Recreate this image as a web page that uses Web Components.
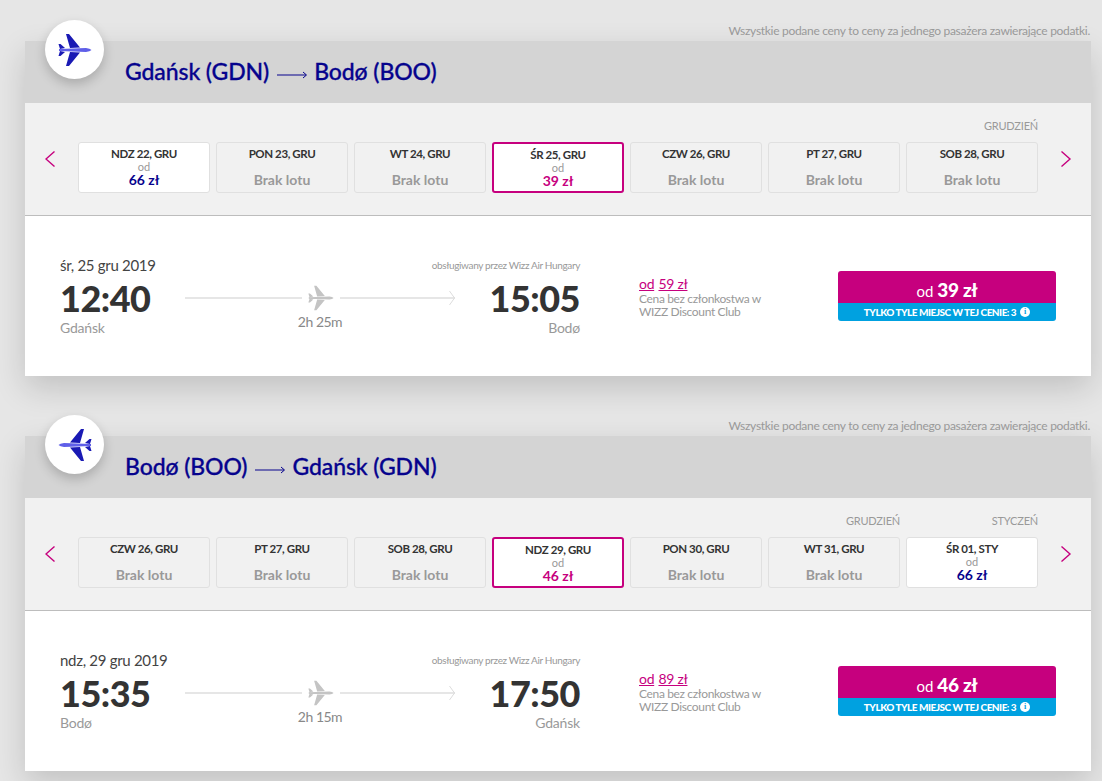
<!DOCTYPE html>
<html lang="pl">
<head>
<meta charset="utf-8">
<title>Wizz Air</title>
<style>
  html, body { margin: 0; padding: 0; }
  body {
    background: #e6e6e6;
    font-family: Lato, "Liberation Sans", sans-serif;
    color: #333;
    height: 781px;
    overflow: hidden;
  }
  main {
    display: flex;
    flex-direction: column;
    gap: 19px;
    padding: 0 11px 0 25px;
  }
</style>
</head>
<body>
<main>
  <flight-section from="Gdańsk (GDN)" to="Bodø (BOO)">
    <date-strip selected="3" dates='[
      {"label":"NDZ 22, GRU","price":"66 zł"},
      {"label":"PON 23, GRU"},
      {"label":"WT 24, GRU"},
      {"label":"ŚR 25, GRU","price":"39 zł"},
      {"label":"CZW 26, GRU"},
      {"label":"PT 27, GRU"},
      {"label":"SOB 28, GRU"}
    ]' months='{"6":"GRUDZIEŃ"}'></date-strip>
    <flight-row date="śr, 25 gru 2019" dep="12:40" arr="15:05" origin="Gdańsk" dest="Bodø" duration="2h 25m" club="59 zł" price="39 zł"></flight-row>
  </flight-section>

  <flight-section from="Bodø (BOO)" to="Gdańsk (GDN)" return>
    <date-strip selected="3" dates='[
      {"label":"CZW 26, GRU"},
      {"label":"PT 27, GRU"},
      {"label":"SOB 28, GRU"},
      {"label":"NDZ 29, GRU","price":"46 zł"},
      {"label":"PON 30, GRU"},
      {"label":"WT 31, GRU"},
      {"label":"ŚR 01, STY","price":"66 zł"}
    ]' months='{"5":"GRUDZIEŃ","6":"STYCZEŃ"}'></date-strip>
    <flight-row date="ndz, 29 gru 2019" dep="15:35" arr="17:50" origin="Bodø" dest="Gdańsk" duration="2h 15m" club="89 zł" price="46 zł"></flight-row>
  </flight-section>
</main>

<script>
const PLANE_WINGS = 'M8 1 L11 1 L22 14.5 L12 15 Z M8 33 L11 33 L22 19.5 L12 19 Z M0.5 11 L2.5 11 L7 15 L2 16 Z M0.5 23 L2.5 23 L7 19 L2 18 Z'
const PLANE_BODY = 'M1 16 L28 15 Q32 15.6 33.5 17 Q32 18.4 28 19 L1 18 Z'

class FlightSection extends HTMLElement {
  connectedCallback() {
    const from = this.getAttribute('from')
    const to = this.getAttribute('to')
    const flip = this.hasAttribute('return') ? 'scaleX(-1)' : 'none'
    this.attachShadow({ mode: 'open' }).innerHTML = `
      <style>
        :host { display: block; position: relative; }
        .note {
          height: 41px;
          box-sizing: border-box;
          padding: 22px 1px 0 0;
          font-size: 12px;
          letter-spacing: -.3px;
          line-height: 18px;
          color: #999;
          text-align: right;
          white-space: nowrap;
        }
        .card { box-shadow: 0 12px 30px rgba(0, 0, 0, .16); background: #f1f1f1; }
        header {
          height: 62px;
          box-sizing: border-box;
          padding: 15px 0 0 100px;
          display: flex;
          align-items: flex-start;
          background: #d4d4d4;
          color: #06038d;
          font-size: 23px;
          font-weight: 500;
          letter-spacing: -.1px;
          -webkit-text-stroke: .3px #06038d;
          line-height: 30px;
          white-space: nowrap;
        }
        header svg { margin: 4px 7px 0 8px; }
        .badge {
          position: absolute;
          left: 20px;
          top: 20px;
          width: 59px;
          height: 59px;
          border-radius: 50%;
          background: #fff;
          box-shadow: 0 5px 12px rgba(0, 0, 0, .2);
          display: flex;
          align-items: center;
          justify-content: center;
        }
        .badge svg { transform: ${flip}; }
      </style>
      <div class="note">Wszystkie podane ceny to ceny za jednego pasażera zawierające podatki.</div>
      <div class="badge">
        <svg width="34" height="34" viewBox="0 0 34 34">
          <path fill="#1a1ab4" d="${PLANE_WINGS}"/>
          <path fill="#5f5fe8" d="${PLANE_BODY}"/>
        </svg>
      </div>
      <div class="card">
        <header>
          <span>${from}</span>
          <svg width="30" height="24" viewBox="0 0 30 24" fill="none" stroke="#06038d" stroke-width="1">
            <path d="M0 15 H29 M26 12 L29.5 15 L26 18"/>
          </svg>
          <span>${to}</span>
        </header>
        <slot></slot>
      </div>
    `
  }
}

class DateStrip extends HTMLElement {
  connectedCallback() {
    const dates = JSON.parse(this.getAttribute('dates') || '[]')
    const months = JSON.parse(this.getAttribute('months') || '{}')
    const selected = Number(this.getAttribute('selected'))
    const monthCells = dates.map((d, i) => `<span>${months[i] || ''}</span>`).join('')
    const tiles = dates.map((d, i) => `
      <date-tile label="${d.label}" ${d.price ? `price="${d.price}"` : ''} ${i === selected ? 'selected' : ''}></date-tile>
    `).join('')
    this.attachShadow({ mode: 'open' }).innerHTML = `
      <style>
        :host {
          display: flex;
          background: #f1f1f1;
          border-bottom: 1px solid #bdbdbd;
          padding: 15px 0 22px;
        }
        .nav { width: 53px; flex: none; display: flex; align-items: flex-start; justify-content: center; }
        .nav svg { margin-top: 33px; }
        .prev { padding-right: 2px; box-sizing: border-box; }
        .next { padding-left: 4px; box-sizing: border-box; }
        .days { flex: 1; }
        .months, .tiles { display: grid; grid-template-columns: repeat(7, 132px); gap: 6px; }
        .months {
          height: 16px;
          margin-bottom: 8px;
          font-size: 11px;
          letter-spacing: -.2px;
          line-height: 16px;
          color: #999;
          text-align: right;
        }
      </style>
      <div class="nav prev">
        <svg width="11" height="16" viewBox="0 0 11 16" fill="none" stroke="#c6007e" stroke-width="1.4"><path d="M9.5 .5 L1 8 L9.5 15.5"/></svg>
      </div>
      <div class="days">
        <div class="months">${monthCells}</div>
        <div class="tiles">${tiles}</div>
      </div>
      <div class="nav next">
        <svg width="11" height="16" viewBox="0 0 11 16" fill="none" stroke="#c6007e" stroke-width="1.4"><path d="M.5 .5 L9 8 L.5 15.5"/></svg>
      </div>
    `
  }
}

class DateTile extends HTMLElement {
  connectedCallback() {
    const label = this.getAttribute('label')
    const price = this.getAttribute('price')
    const body = price
      ? `<div class="od">od</div><div class="price">${price}</div>`
      : `<div class="none">Brak lotu</div>`
    this.attachShadow({ mode: 'open' }).innerHTML = `
      <style>
        :host {
          display: block;
          height: 51px;
          box-sizing: border-box;
          border: 1px solid #e0e0e0;
          border-radius: 3px;
          text-align: center;
          padding-top: 3px;
          white-space: nowrap;
        }
        :host([price]) { background: #fff; }
        :host([selected]) { border: 2px solid #c6007e; }
        .label { font-size: 11.5px; letter-spacing: -.4px; line-height: 16px; font-weight: 700; color: #333; }
        .od { font-size: 11px; line-height: 10px; color: #999; }
        .price { font-size: 14px; line-height: 14px; font-weight: 700; color: #06038d; margin-top: 1px; }
        :host([selected]) .price { color: #c6007e; }
        .none { font-size: 14px; line-height: 18px; font-weight: 700; color: #999; margin-top: 9px; }
      </style>
      <div class="label">${label}</div>
      ${body}
    `
  }
}

class FlightRow extends HTMLElement {
  connectedCallback() {
    const a = (name) => this.getAttribute(name)
    this.attachShadow({ mode: 'open' }).innerHTML = `
      <style>
        :host {
          display: grid;
          grid-template-columns: 520px 59px 199px 218px;
          height: 160px;
          box-sizing: border-box;
          padding: 40px 35px 0;
          background: #fff;
        }
        .times { grid-column: 1; }
        .top { display: flex; justify-content: space-between; align-items: center; height: 18px; }
        .date { font-size: 15px; letter-spacing: -.3px; line-height: 18px; color: #444; }
        .operator { font-size: 10px; letter-spacing: -.35px; color: #999; }
        .main { display: flex; align-items: center; height: 44px; margin-top: 2px; }
        .time { font-size: 36px; letter-spacing: -.5px; line-height: 44px; font-weight: 900; color: #333; width: 100px; }
        .time.end { text-align: right; width: 95px; }
        .route { flex: 1; position: relative; height: 44px; display: flex; align-items: center; padding-left: 25px; }
        .line { height: 2px; background: #e6e6e6; flex: none; }
        .route svg { flex: none; }
        .duration {
          position: absolute;
          left: 110px;
          top: 37px;
          width: 100px;
          text-align: center;
          font-size: 14px;
          letter-spacing: -.5px;
          line-height: 18px;
          color: #888;
        }
        .cities { display: flex; justify-content: space-between; font-size: 14px; letter-spacing: -.2px; line-height: 18px; color: #999; margin-top: -1px; }
        .club { grid-column: 3; padding-top: 19px; }
        .club a { display: block; font-size: 14px; letter-spacing: -.3px; line-height: 17px; color: #c6007e; text-decoration: none; }
        .club a span { text-decoration: underline; margin-right: 1px; }
        .club p { margin: 0; font-size: 12px; letter-spacing: -.35px; line-height: 13px; color: #999; }
      </style>
      <div class="times">
        <div class="top"><span class="date">${a('date')}</span><span class="operator">obsługiwany przez Wizz Air Hungary</span></div>
        <div class="main">
          <span class="time">${a('dep')}</span>
          <div class="route">
            <div class="line" style="width:117px"></div>
            <svg width="26" height="26" viewBox="0 0 34 34" style="margin:0 6px"><path fill="#c4c4c4" d="${PLANE_WINGS} ${PLANE_BODY}"/></svg>
            <div class="line" style="width:115px"></div>
            <svg width="6" height="16" viewBox="0 0 6 16" fill="none" stroke="#dcdcdc" style="margin-left:-6px"><path d="M.5 1 L5.5 8 L.5 15"/></svg>
            <div class="duration">${a('duration')}</div>
          </div>
          <span class="time end">${a('arr')}</span>
        </div>
        <div class="cities"><span>${a('origin')}</span><span>${a('dest')}</span></div>
      </div>
      <div class="club">
        <a><span>od</span> <span>${a('club')}</span></a>
        <p>Cena bez członkostwa w<br>WIZZ Discount Club</p>
      </div>
      <price-button style="grid-column:4" price="${a('price')}" seats="3"></price-button>
    `
  }
}

class PriceButton extends HTMLElement {
  connectedCallback() {
    const price = this.getAttribute('price')
    const seats = this.getAttribute('seats')
    this.attachShadow({ mode: 'open' }).innerHTML = `
      <style>
        :host {
          display: block;
          height: 50px;
          margin-top: 15px;
          border-radius: 3px;
          overflow: hidden;
          color: #fff;
          text-align: center;
          white-space: nowrap;
        }
        .price { height: 32px; background: #c6007e; font-size: 15px; line-height: 38px; }
        .price b { font-size: 19px; font-weight: 900; letter-spacing: -.3px; }
        .seats {
          height: 18px;
          background: #00a1e0;
          font-size: 10px;
          font-weight: 900;
          letter-spacing: -.5px;
          line-height: 18px;
          display: flex;
          align-items: center;
          justify-content: center;
          gap: 4px;
        }
        .info {
          width: 10px;
          height: 10px;
          border-radius: 50%;
          background: #fff;
          color: #00a1e0;
          font: 700 8px/10px "Liberation Serif", serif;
          letter-spacing: 0;
        }
      </style>
      <div class="price">od <b>${price}</b></div>
      <div class="seats"><span>TYLKO TYLE MIEJSC W TEJ CENIE: ${seats}</span><span class="info">i</span></div>
    `
  }
}

customElements.define('flight-section', FlightSection)
customElements.define('date-strip', DateStrip)
customElements.define('date-tile', DateTile)
customElements.define('flight-row', FlightRow)
customElements.define('price-button', PriceButton)
</script>
</body>
</html>
